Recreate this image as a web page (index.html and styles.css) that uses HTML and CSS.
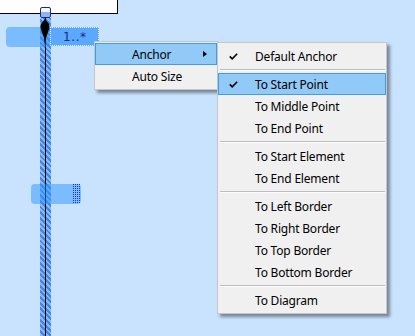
FILE: index.html
```html
<!doctype html>
<html>
<head>
  <title>Anchor menu</title>
  <link rel="stylesheet" href="styles.css">
</head>
<body>
  <div id="canvas">
    <div class="shape"></div>

    <div class="link"></div>
    <div class="pill pill-top"></div>
    <div class="label">1..*</div>
    <div class="pill pill-mid"><span class="grip"></span></div>

    <svg class="arrow" width="12" height="30" viewBox="0 0 12 30">
      <path d="M6 1 L10 6 L10.5 10 L7 20 L6 28 L5 20 L1.5 10 L2 6 Z" fill="#000"/>
    </svg>
    <div class="handle"></div>

    <div class="menu menu-main">
      <div class="item active">Anchor<span class="caret"></span></div>
      <div class="item">Auto Size</div>
    </div>

    <div class="menu menu-sub">
      <div class="item checked">
        <svg class="check" width="9" height="7" viewBox="0 0 9 7"><path d="M0.8 3.4 L3.2 5.8 L8.2 0.8" fill="none" stroke="#000" stroke-width="1.6"/></svg>
        Default Anchor
      </div>
      <div class="sep"></div>
      <div class="item active checked">
        <svg class="check" width="9" height="7" viewBox="0 0 9 7"><path d="M0.8 3.4 L3.2 5.8 L8.2 0.8" fill="none" stroke="#000" stroke-width="1.6"/></svg>
        To Start Point
      </div>
      <div class="item">To Middle Point</div>
      <div class="item">To End Point</div>
      <div class="sep"></div>
      <div class="item">To Start Element</div>
      <div class="item">To End Element</div>
      <div class="sep"></div>
      <div class="item">To Left Border</div>
      <div class="item">To Right Border</div>
      <div class="item">To Top Border</div>
      <div class="item">To Bottom Border</div>
      <div class="sep"></div>
      <div class="item">To Diagram</div>
    </div>
  </div>
</body>
</html>
```

FILE: styles.css
```css
html, body {
  margin: 0;
  padding: 0;
}

body {
  background: #c9e2fe;
  font-family: "Noto Sans", "Open Sans", sans-serif;
  font-size: 12px;
  overflow: hidden;
}

#canvas {
  position: relative;
  width: 415px;
  height: 336px;
}

/* diagram pieces */
.shape {
  position: absolute;
  left: -1px;
  top: -1px;
  width: 117px;
  height: 13px;
  background: #fff;
  border: 1px solid #000;
}

.link {
  position: absolute;
  left: 40px;
  top: 18px;
  width: 11px;
  height: 320px;
  background: repeating-linear-gradient(45deg, #3f86e6 0 2px, #8ab9f2 2px 4px);
}

.link::after {
  content: "";
  position: absolute;
  left: 5px;
  top: 0;
  width: 1px;
  height: 100%;
  background: #000;
}

.pill {
  position: absolute;
  background: rgba(45, 150, 255, 0.5);
  border-radius: 4px;
}

.pill-top {
  left: 6px;
  top: 27px;
  width: 44px;
  height: 20px;
}

.pill-mid {
  left: 31px;
  top: 184px;
  width: 50px;
  height: 20px;
}

.grip {
  position: absolute;
  left: 41px;
  top: 0;
  width: 8px;
  height: 20px;
  background: conic-gradient(#1d33c4 25%, transparent 0) 0 0 / 2px 2px;
}

.label {
  position: absolute;
  left: 50px;
  top: 27px;
  width: 35px;
  height: 17px;
  background: #5ba8ff;
  border: 1px dotted #e8f2ff;
  color: #1d2a78;
  font-family: "DejaVu Sans", sans-serif;
  font-size: 12px;
  line-height: 18px;
  padding-left: 12px;
  letter-spacing: 0.6px;
}

.arrow {
  position: absolute;
  left: 39px;
  top: 18px;
}

.handle {
  position: absolute;
  left: 40px;
  top: 7px;
  width: 9px;
  height: 9px;
  border: 1px solid #1b2a86;
  border-radius: 2px;
  background: linear-gradient(#f2f6ff 0 40%, #8fb4ea 40%);
}

/* popup menus */
.menu {
  position: absolute;
  background: #f0f0f0;
  border: 1px solid #c6c6c6;
  box-shadow: 3px 3px 3px rgba(0, 0, 0, 0.4);
  padding: 2px 0;
  color: #000;
  letter-spacing: -0.2px;
}

.menu-main {
  left: 94px;
  top: 41px;
  width: 122px;
  padding-top: 1px;
}

.menu-sub {
  left: 217px;
  top: 42px;
  width: 168px;
}

.item {
  position: relative;
  height: 22px;
  line-height: 21px;
  padding-left: 36px;
  border: 1px solid transparent;
  box-sizing: border-box;
  white-space: nowrap;
}

.item.active {
  background: #91c9f7;
  border-color: #3d9bf1;
}

.check {
  position: absolute;
  left: 10px;
  top: 7px;
}

.caret {
  position: absolute;
  right: 9px;
  top: 7px;
  border-left: 4px solid #000;
  border-top: 3.5px solid transparent;
  border-bottom: 3.5px solid transparent;
}

.sep {
  height: 6px;
  margin: 0 1px 0 2px;
  position: relative;
}

.sep::after {
  content: "";
  position: absolute;
  left: 0;
  right: 0;
  top: 2px;
  height: 1px;
  background: #bdbdbd;
  border-bottom: 1px solid #fdfdfd;
}
```
